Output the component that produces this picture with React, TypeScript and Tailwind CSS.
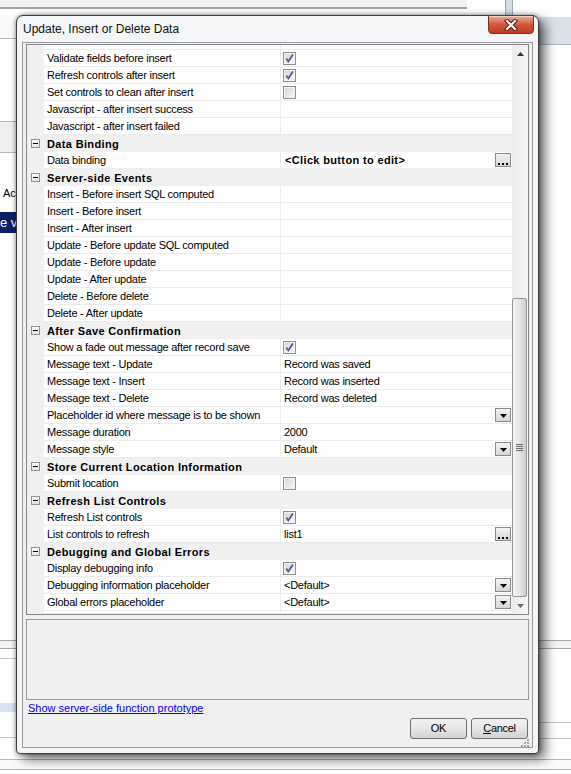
import React from 'react';

type Editor = 'drop' | 'dots';
type Row =
  | { cat: string }
  | { name: string; value?: string; bold?: boolean; check?: boolean; editor?: Editor };

const rows: Row[] = [
  { name: 'Validate fields before insert', check: true },
  { name: 'Refresh controls after insert', check: true },
  { name: 'Set controls to clean after insert', check: false },
  { name: 'Javascript - after insert success' },
  { name: 'Javascript - after insert failed' },
  { cat: 'Data Binding' },
  { name: 'Data binding', value: '<Click button to edit>', bold: true, editor: 'dots' },
  { cat: 'Server-side Events' },
  { name: 'Insert - Before insert SQL computed' },
  { name: 'Insert - Before insert' },
  { name: 'Insert - After insert' },
  { name: 'Update - Before update SQL computed' },
  { name: 'Update - Before update' },
  { name: 'Update - After update' },
  { name: 'Delete - Before delete' },
  { name: 'Delete - After update' },
  { cat: 'After Save Confirmation' },
  { name: 'Show a fade out message after record save', check: true },
  { name: 'Message text - Update', value: 'Record was saved' },
  { name: 'Message text - Insert', value: 'Record was inserted' },
  { name: 'Message text - Delete', value: 'Record was deleted' },
  { name: 'Placeholder id where message is to be shown', editor: 'drop' },
  { name: 'Message duration', value: '2000' },
  { name: 'Message style', value: 'Default', editor: 'drop' },
  { cat: 'Store Current Location Information' },
  { name: 'Submit location', check: false },
  { cat: 'Refresh List Controls' },
  { name: 'Refresh List controls', check: true },
  { name: 'List controls to refresh', value: 'list1', editor: 'dots' },
  { cat: 'Debugging and Global Errors' },
  { name: 'Display debugging info', check: true },
  { name: 'Debugging information placeholder', value: '<Default>', editor: 'drop' },
  { name: 'Global errors placeholder', value: '<Default>', editor: 'drop' },
];

const CheckBox = ({ checked }: { checked: boolean }) => (
  <svg width="13" height="13" viewBox="0 0 13 13" className="shrink-0">
    <defs>
      <linearGradient id="cbfill" x1="0" y1="0" x2="1" y2="1">
        <stop offset="0" stopColor="#d6d6d6" />
        <stop offset="1" stopColor="#f7f7f7" />
      </linearGradient>
    </defs>
    <rect x="0.5" y="0.5" width="12" height="12" fill="#f4f4f4" stroke="#8e8f8f" />
    <rect x="2" y="2" width="9" height="9" fill="url(#cbfill)" />
    {checked && (
      <path d="M3.3 6.6 L5.3 9.4 L9.9 2.6" fill="none" stroke="#475894" strokeWidth="1.7" />
    )}
  </svg>
);

const MinusBox = () => (
  <div className="flex h-[9px] w-[9px] items-center justify-center border border-[#919191] bg-linear-to-b from-white to-[#e2e2e2]">
    <div className="h-px w-[5px] bg-black" />
  </div>
);

const EditButton = ({ kind }: { kind: Editor }) => (
  <div className="ml-auto flex h-[14px] w-[16px] shrink-0 justify-center border border-[#8a8a8a] bg-linear-to-b from-[#f4f4f4] to-[#d6d6d6]">
    {kind === 'drop' ? (
      <svg width="7" height="4" viewBox="0 0 7 4" className="mt-[5px]">
        <path d="M0 0H7L3.5 4Z" fill="#000" />
      </svg>
    ) : (
      <svg width="10" height="2" viewBox="0 0 10 2" className="mt-[9px]">
        <rect x="0" y="0" width="2" height="2" fill="#000" />
        <rect x="4" y="0" width="2" height="2" fill="#000" />
        <rect x="8" y="0" width="2" height="2" fill="#000" />
      </svg>
    )}
  </div>
);

const GridRow = ({ row }: { row: Row }) => {
  if ('cat' in row) {
    return (
      <div className="flex h-[17px] items-center bg-[#f0f0f0]">
        <div className="flex w-[17px] shrink-0 pl-[4px]">
          <MinusBox />
        </div>
        <span className="pl-[3px] font-bold tracking-[0.35px]">{row.cat}</span>
      </div>
    );
  }
  return (
    <div className="flex h-[17px]">
      <div className="w-[17px] shrink-0 bg-[#f0f0f0]" />
      <div className="flex w-[237px] shrink-0 items-center overflow-hidden whitespace-nowrap border-b border-r border-[#ececec] bg-white pl-[3px] tracking-[-0.25px]">
        {row.name}
      </div>
      <div className="flex min-w-0 flex-1 items-center whitespace-nowrap border-b border-[#ececec] bg-white pr-[1px]">
        {row.check !== undefined && (
          <div className="pl-[2px]">
            <CheckBox checked={row.check} />
          </div>
        )}
        {row.value && (
          <span className={row.bold ? 'pl-[4px] font-bold tracking-[0.35px]' : 'pl-[3px] tracking-[-0.25px]'}>
            {row.value}
          </span>
        )}
        {row.editor && <EditButton kind={row.editor} />}
      </div>
    </div>
  );
};

const EmptyRow = ({ h }: { h: string }) => (
  <div className={`flex ${h}`}>
    <div className="w-[17px] shrink-0 bg-[#f0f0f0]" />
    <div className="w-[237px] shrink-0 border-b border-r border-[#ececec] bg-white" />
    <div className="flex-1 border-b border-[#ececec] bg-white" />
  </div>
);

const ScrollBar = () => (
  <div className="flex w-[16px] shrink-0 flex-col bg-linear-to-r from-[#ebebeb] to-[#f6f6f6]">
    <div className="flex h-[17px] items-center justify-center">
      <svg width="7" height="4" viewBox="0 0 7 4">
        <path d="M0 4H7L3.5 0Z" fill="#333" />
      </svg>
    </div>
    <div className="flex flex-1 flex-col">
      <div className="mt-auto flex h-[299px] w-[15px] items-center justify-center rounded-[2px] border border-[#969696] bg-linear-to-r from-[#f4f4f4] via-[#e6e6e6] to-[#cdcdcd]">
        <div className="flex flex-col gap-px">
          <div className="h-px w-[7px] bg-[#6a6a6a]" />
          <div className="h-px w-[7px] bg-[#6a6a6a]" />
          <div className="h-px w-[7px] bg-[#6a6a6a]" />
          <div className="h-px w-[7px] bg-[#6a6a6a]" />
        </div>
      </div>
    </div>
    <div className="flex h-[17px] items-center justify-center">
      <svg width="7" height="4" viewBox="0 0 7 4">
        <path d="M0 0H7L3.5 4Z" fill="#6d6d6d" />
      </svg>
    </div>
  </div>
);

const CloseButton = () => (
  <div className="absolute right-[4px] top-[-1px] flex h-[19px] w-[46px] items-center justify-center rounded-b-[4px] border border-[#7b2e22] bg-linear-to-b from-[#e8ad9f] via-[#d2573f] to-[#bf3b25] shadow-[inset_0_1px_0_rgba(255,255,255,0.5)]">
    <svg width="14" height="12" viewBox="0 0 14 12">
      <path d="M3 2 L11 10 M11 2 L3 10" stroke="#5b2118" strokeWidth="4.2" strokeLinecap="square" />
      <path d="M3 2 L11 10 M11 2 L3 10" stroke="#fff" strokeWidth="2.2" strokeLinecap="square" />
    </svg>
  </div>
);

const ResizeGrip = () => (
  <svg width="8" height="8" viewBox="0 0 8 8">
    {[
      [6, 0],
      [3, 3],
      [6, 3],
      [0, 6],
      [3, 6],
      [6, 6],
    ].map(([x, y]) => (
      <rect key={`${x}-${y}`} x={x} y={y} width="2" height="2" fill="#a9a9a9" />
    ))}
  </svg>
);

const Backdrop = () => (
  <div className="flex h-full flex-col">
    <div className="flex h-[15px] shrink-0">
      <div className="h-[9px] w-[467px] border-b-2 border-[#a3a3a3] bg-[#f2f2f2]" />
      <div className="ml-[38px] w-[8px] border-x border-[#9aa9bd] bg-[#d3dce7]" />
    </div>
    <div className="flex h-[744px] shrink-0">
      <div className="flex w-[16px] shrink-0 flex-col overflow-hidden text-[11px] whitespace-nowrap">
        <div className="h-[24px] border-b border-[#b9b9b9] bg-[#fafafa]" />
        <div className="h-[83px] border-b border-[#b9b9b9]" />
        <div className="h-[31px] border-b border-[#b9b9b9] bg-[#efefef]" />
        <div className="h-[34px]" />
        <div className="h-[13px] pl-[3px] leading-[13px]">Ac</div>
        <div className="h-[12px]" />
        <div className="flex h-[21px] items-center bg-[#0e1f6a] text-[13px] text-white">e v</div>
        <div className="h-[407px]" />
        <div className="h-[9px] border-y border-[#a8a8a8] bg-[#f3f3f3]" />
        <div className="h-[10px] border-b border-[#c4c4c4]" />
        <div className="h-[44px]" />
        <div className="h-[9px] bg-[#d7e3f1]" />
        <div className="h-[26px] border-b border-[#c4c4c4]" />
      </div>
      <div className="flex-1" />
      <div className="flex w-[32px] shrink-0 flex-col">
        <div className="h-[2px]" />
        <div className="h-[28px] border-b border-[#aab6c5] bg-[#d9e1eb]" />
        <div className="h-[595px]" />
        <div className="h-[9px] border-y border-[#a8a8a8] bg-[#f3f3f3]" />
        <div className="h-[74px] border-b border-[#c4c4c4]" />
        <div className="h-[16px] border-b border-[#c4c4c4]" />
      </div>
    </div>
    <div className="h-[11px] shrink-0 border-t border-b border-[#b4b4b4] bg-[#fafafa]" />
  </div>
);

const Dialog = () => (
  <div className="absolute left-[16px] top-[15px] flex h-[739px] w-[523px] flex-col rounded-t-[7px] rounded-b-[4px] border border-[#3e3e3e] bg-[#f4f5f6] shadow-[0_0_4px_rgba(0,0,0,0.45),6px_5px_12px_rgba(0,0,0,0.6)]">
    <div className="relative flex h-[26px] shrink-0 items-center pl-[6px] text-[12px] text-[#111]">
      Update, Insert or Delete Data
      <CloseButton />
    </div>
    <div className="mx-[5px] mb-[5px] flex flex-1 flex-col border border-[#9a9a9a] bg-[#f0f0f0] px-[3px] pt-px">
      <div className="flex h-[571px] shrink-0 border border-[#828790] bg-white text-[11px] leading-[16px]">
        <div className="flex min-w-0 flex-1 flex-col">
          <EmptyRow h="h-[5px]" />
          {rows.map((row, i) => (
            <GridRow key={i} row={row} />
          ))}
          <EmptyRow h="flex-1" />
        </div>
        <ScrollBar />
      </div>
      <div className="mt-[4px] h-[81px] shrink-0 border border-[#9a9a9a] bg-[#f0f0f0]" />
      <div className="h-[17px] shrink-0 pl-[2px] text-[11px] leading-[17px]">
        <span className="text-[#0000ff] underline">Show server-side function prototype</span>
      </div>
      <div className="mt-px flex shrink-0 justify-end gap-[4px] pr-px text-[11px]">
        <button className="h-[21px] w-[57px] rounded-[3px] border border-[#707070] bg-linear-to-b from-[#f2f2f2] via-[#e6e6e6] to-[#d2d2d2] tracking-[-0.2px]">
          OK
        </button>
        <button className="h-[21px] w-[57px] rounded-[3px] border border-[#707070] bg-linear-to-b from-[#f2f2f2] via-[#e6e6e6] to-[#d2d2d2] tracking-[-0.3px]">
          <span className="underline">C</span>ancel
        </button>
      </div>
      <div className="flex flex-1 items-end justify-end">
        <ResizeGrip />
      </div>
    </div>
  </div>
);

export default function App() {
  return (
    <div className="relative h-[774px] w-[571px] overflow-hidden bg-white font-['Liberation_Sans',Arial,sans-serif] text-black">
      <Backdrop />
      <Dialog />
    </div>
  );
}
